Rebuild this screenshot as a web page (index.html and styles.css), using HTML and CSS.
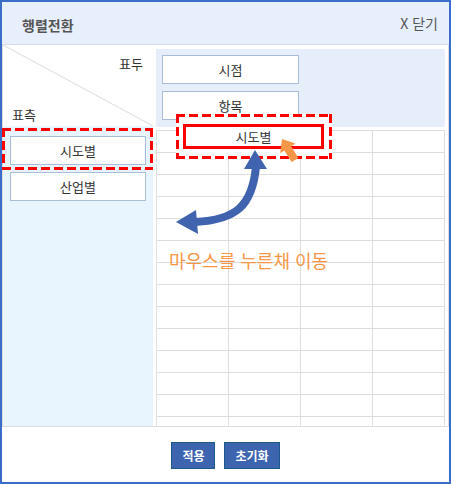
FILE: index.html
```html
<!DOCTYPE html>
<html lang="ko">
<head>
    <meta charset="UTF-8">
    <meta name="viewport" content="width=device-width, initial-scale=1.0">
    <title>행렬전환</title>
    <link rel="stylesheet" href="styles.css">
</head>
<body>
<div class="dialog">
    <div class="dialog-head">
        <span class="dialog-title">행렬전환</span>
        <span class="dialog-close">X 닫기</span>
    </div>

    <div class="dialog-body">
        <div class="side">
            <div class="corner">
                <span class="corner-col">표두</span>
                <span class="corner-row">표측</span>
            </div>
            <div class="row-items">
                <div class="pick dashed">
                    <button class="item">시도별</button>
                </div>
                <button class="item item-row">산업별</button>
            </div>
        </div>

        <div class="pane">
            <div class="col-items">
                <button class="item">시점</button>
                <button class="item">항목</button>
            </div>
            <div class="grid">
                <span></span><span></span><span></span><span></span>
                <span></span><span></span><span></span><span></span>
                <span></span><span></span><span></span><span></span>
                <span></span><span></span><span></span><span></span>
                <span></span><span></span><span></span><span></span>
                <span></span><span></span><span></span><span></span>
                <span></span><span></span><span></span><span></span>
                <span></span><span></span><span></span><span></span>
                <span></span><span></span><span></span><span></span>
                <span></span><span></span><span></span><span></span>
                <span></span><span></span><span></span><span></span>
                <span></span><span></span><span></span><span></span>
                <span></span><span></span><span></span><span></span>
                <span></span><span></span><span></span><span></span>
            </div>
        </div>
    </div>

    <div class="dialog-foot">
        <button class="btn">적용</button>
        <button class="btn">초기화</button>
    </div>

    <!-- drag preview -->
    <div class="drag dashed">
        <div class="drag-item">시도별</div>
    </div>
    <span class="hint">마우스를 누른채 이동</span>
    <svg class="arrows" width="451" height="484" viewBox="0 0 451 484">
        <path d="M256 167 C252 206 236 220 195 222" fill="none" stroke="#3f63ae" stroke-width="8"/>
        <polygon points="255,150 244,169 267,169" fill="#3f63ae"/>
        <polygon points="176,222 196,210 198,234" fill="#3f63ae"/>
        <polygon points="282,139 295.4,143.6 291.2,146.3 298.4,157.9 291.6,162.1 284.4,150.5 280.2,153.2" fill="#f79646"/>
    </svg>
</div>
</body>
</html>
```

FILE: styles.css
```css
body {
    margin: 0;
    font-family: "Noto Sans CJK KR", "Noto Sans", sans-serif;
}

button {
    font-family: inherit;
    cursor: pointer;
}

.dialog {
    position: relative;
    width: 451px;
    height: 484px;
    box-sizing: border-box;
    border: 2px solid #3a6cc9;
    background: #fff;
    display: flex;
    flex-direction: column;
}

.dialog-head {
    height: 43px;
    box-sizing: border-box;
    border-bottom: 1px solid #d5dbe5;
    background: #e8effc;
    display: flex;
    justify-content: space-between;
    align-items: center;
    padding: 0 11px 0 20px;
}

.dialog-title {
    font-size: 14px;
    font-weight: bold;
    color: #555;
    margin-top: 3px;
}

.dialog-close {
    font-size: 14px;
    color: #555;
}

.dialog-body {
    flex: 1;
    min-height: 0;
    display: flex;
    gap: 3px;
    padding-right: 3px;
    border: 1px solid #dcdcdc;
    border-top: 0;
}

.side {
    width: 150px;
    display: flex;
    flex-direction: column;
}

.corner {
    height: 81px;
    box-sizing: border-box;
    display: flex;
    flex-direction: column;
    justify-content: space-between;
    padding: 11px 10px 3px 9px;
    font-size: 13px;
    line-height: 16px;
    color: #333;
    background: linear-gradient(to top right, transparent calc(50% - 1px), #dedede 50%, transparent calc(50% + 1px));
}

.corner-col {
    align-self: flex-end;
}

.row-items {
    flex: 1;
    background: #e8f4fe;
    padding-top: 2px;
}

/* red dashed frame, 9px dash / 4px gap */
.dashed {
    background:
        repeating-linear-gradient(90deg, #f00 0 9px, transparent 9px 13px) left top / 100% 3px no-repeat,
        repeating-linear-gradient(90deg, #f00 0 9px, transparent 9px 13px) left bottom / 100% 3px no-repeat,
        repeating-linear-gradient(180deg, #f00 0 9px, transparent 9px 13px) left top / 3px 100% no-repeat,
        repeating-linear-gradient(180deg, #f00 0 9px, transparent 9px 13px) right top / 3px 100% no-repeat;
}

.pick {
    padding: 8px 7px 5px 8px;
    margin-left: -1px;
}

.item {
    display: block;
    width: 100%;
    height: 29px;
    box-sizing: border-box;
    padding: 0;
    background: #fff;
    border: 1px solid #a9bdd8;
    font-size: 13px;
    color: #333;
}

.item-row {
    width: 136px;
    margin: 2px 0 0 7px;
}

.pane {
    width: 289px;
    display: flex;
    flex-direction: column;
}

.col-items {
    margin-top: 4px;
    height: 78px;
    box-sizing: border-box;
    padding: 6px;
    background: #e6eefc;
    display: flex;
    flex-direction: column;
    gap: 7px;
}

.col-items .item {
    width: 137px;
}

.grid {
    flex: 1;
    min-height: 0;
    margin-top: 3px;
    overflow: hidden;
    display: grid;
    grid-template-columns: repeat(4, 72px);
    grid-auto-rows: 22px;
    align-content: start;
    border-top: 1px solid #ddd;
    border-left: 1px solid #ddd;
}

.grid span {
    border-right: 1px solid #ddd;
    border-bottom: 1px solid #ddd;
}

.dialog-foot {
    height: 55px;
    box-sizing: border-box;
    padding-top: 2px;
    display: flex;
    justify-content: center;
    align-items: center;
    gap: 9px;
}

.btn {
    height: 27px;
    padding: 0 10px;
    background: #3d64ae;
    border: 1px solid #1b5a8b;
    color: #fff;
    font-size: 12px;
    font-weight: bold;
}

.drag {
    position: absolute;
    left: 174px;
    top: 112px;
    width: 156px;
    height: 45px;
    box-sizing: border-box;
    background-color: #fff;
    padding: 10px 8px 0 7px;
}

.drag-item {
    height: 25px;
    box-sizing: border-box;
    border: 3px solid #f00;
    background: #fff;
    font-size: 13px;
    line-height: 19px;
    color: #333;
    text-align: center;
}

.hint {
    position: absolute;
    left: 167px;
    top: 246px;
    font-size: 18px;
    line-height: 24px;
    color: #f79646;
}

.arrows {
    position: absolute;
    left: -2px;
    top: -2px;
    pointer-events: none;
}
```
